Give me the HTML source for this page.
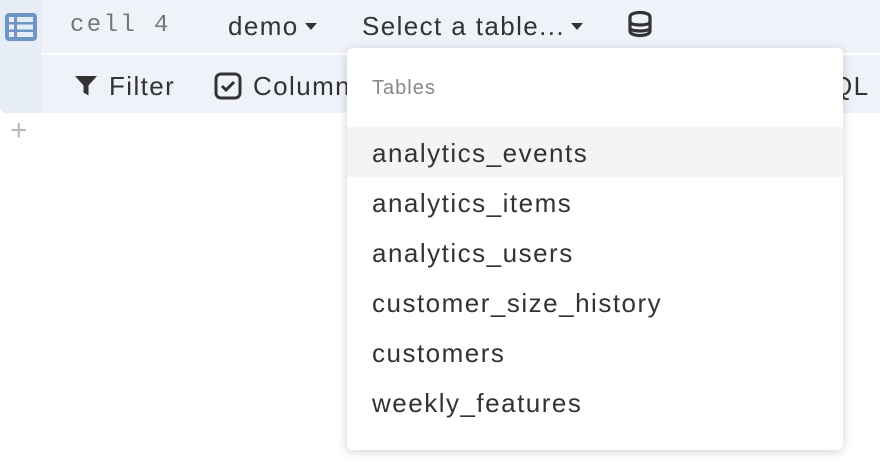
<!DOCTYPE html>
<html><head><style>
body{margin:0;width:880px;height:474px;background:#fff;font-family:"Liberation Sans",sans-serif;position:relative;overflow:hidden}
.bar{position:absolute;left:0;top:0;width:880px;height:113px;background:#eff3f9;border-bottom-left-radius:6px}
.left{position:absolute;left:0;top:0;width:41px;height:113px;background:#e6edf6;border-bottom-left-radius:6px}
.div{position:absolute;left:41px;top:53px;width:839px;height:2px;background:#fff}
.t{position:absolute;color:#333;font-size:26px;letter-spacing:1.4px;white-space:nowrap}
.dd{position:absolute;left:347px;top:48px;width:496px;height:402px;background:#fff;border-radius:6px;box-shadow:0 2px 10px rgba(0,0,0,.18)}
.it{position:absolute;left:0;width:496px;height:50px;line-height:52px;padding-left:25px;box-sizing:border-box;font-size:26px;letter-spacing:1.5px;color:#333}
.car{display:inline-block;width:0;height:0;border-left:6px solid transparent;border-right:6px solid transparent;border-top:7px solid #333;vertical-align:middle;margin-left:6px;position:relative;top:-2px}
</style></head><body>
<div class="bar"></div><div class="left"></div><div class="div"></div>
<svg style="position:absolute;left:5px;top:13px" width="32" height="28"><rect x="0" y="0" width="32" height="28" rx="4" fill="#6d95c6"/><g fill="#e6edf6"><rect x="4" y="4" width="5" height="5"/><rect x="12" y="4" width="16" height="5"/><rect x="4" y="11.5" width="5" height="5"/><rect x="12" y="11.5" width="16" height="5"/><rect x="4" y="19" width="5" height="5"/><rect x="12" y="19" width="16" height="5"/></g></svg>
<div class="t" style="left:70px;top:12px;font-family:'Liberation Mono',monospace;color:#777;font-size:24px;letter-spacing:2.4px">cell 4</div>
<div class="t" style="left:228px;top:11px">demo<span class="car"></span></div>
<div class="t" style="left:362px;top:11px">Select a table...<span class="car"></span></div>
<svg style="position:absolute;left:628px;top:10px" width="24" height="28" viewBox="0 0 24 28"><g fill="none" stroke="#333" stroke-width="3.2"><path d="M2 7c0-6 20-6 20 0v14c0 6-20 6-20 0z"/><path d="M2 12c0 4 20 4 20 0M2 18c0 4 20 4 20 0"/></g></svg>
<svg style="position:absolute;left:75px;top:76px" width="22" height="20"><path d="M0 0h22l-8.5 9.5v10l-5-3v-7z" fill="#333"/></svg>
<div class="t" style="left:109px;top:71px">Filter</div>
<svg style="position:absolute;left:214px;top:72px" width="28" height="28"><rect x="2" y="2" width="24" height="24" rx="5" fill="none" stroke="#333" stroke-width="3"/><path d="M8 14l4 4 8-8" fill="none" stroke="#333" stroke-width="3"/></svg>
<div class="t" style="left:253px;top:71px">Columns</div>
<div class="t" style="left:832px;top:71px">QL</div>
<div class="t" style="left:10px;top:114px;color:#bbb;font-size:30px">+</div>
<div class="dd">
<div style="position:absolute;left:25px;top:29px;font-size:20px;letter-spacing:1px;color:#888">Tables</div>
<div class="it" style="top:79px;background:#f4f4f4">analytics_events</div>
<div class="it" style="top:129px">analytics_items</div>
<div class="it" style="top:179px">analytics_users</div>
<div class="it" style="top:229px">customer_size_history</div>
<div class="it" style="top:279px">customers</div>
<div class="it" style="top:329px">weekly_features</div>
</div>
</body></html>
